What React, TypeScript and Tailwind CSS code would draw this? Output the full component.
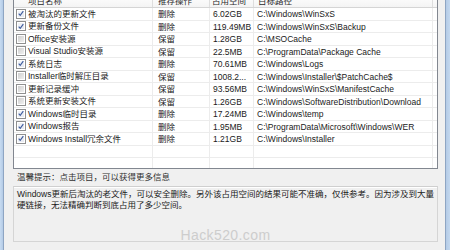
import React from "react";

const rows = [
  { name: "被淘汰的更新文件", checked: true, action: "删除", size: "6.02GB", path: "C:\\Windows\\WinSxS" },
  { name: "更新备份文件", checked: true, action: "删除", size: "119.49MB", path: "C:\\Windows\\WinSxS\\Backup" },
  { name: "Office安装源", checked: false, action: "保留", size: "1.28GB", path: "C:\\MSOCache" },
  { name: "Visual Studio安装源", checked: false, action: "保留", size: "22.5MB", path: "C:\\ProgramData\\Package Cache" },
  { name: "系统日志", checked: true, action: "删除", size: "70.61MB", path: "C:\\Windows\\Logs" },
  { name: "Installer临时解压目录", checked: false, action: "保留", size: "1008.2...", path: "C:\\Windows\\Installer\\$PatchCache$" },
  { name: "更新记录缓冲", checked: false, action: "保留", size: "93.56MB", path: "C:\\Windows\\WinSxS\\ManifestCache" },
  { name: "系统更新安装文件", checked: false, action: "保留", size: "1.26GB", path: "C:\\Windows\\SoftwareDistribution\\Download" },
  { name: "Windows临时目录", checked: true, action: "删除", size: "17.24MB", path: "C:\\Windows\\temp" },
  { name: "Windows报告", checked: true, action: "删除", size: "1.95MB", path: "C:\\ProgramData\\Microsoft\\Windows\\WER" },
  { name: "Windows Install冗余文件", checked: true, action: "删除", size: "1.21GB", path: "C:\\Windows\\Installer" },
];

function CheckBox({ checked }: { checked: boolean }) {
  return (
    <div className="w-[10px] h-[10px] shrink-0 border border-[#8f8f8f] bg-white p-[1px]">
      <div
        className={
          checked
            ? "w-full h-full bg-gradient-to-br from-[#f2f4f8] to-[#e6e9f0] flex items-center justify-center"
            : "w-full h-full bg-gradient-to-br from-[#cfcfcf] to-[#f0f0f0]"
        }
      >
        {checked && (
          <svg width="7" height="7" viewBox="0 0 7 7">
            <path d="M0.8 3.6 L2.6 5.6 L6.2 0.8" fill="none" stroke="#3c5a9c" strokeWidth="1.3" />
          </svg>
        )}
      </div>
    </div>
  );
}

export default function App() {
  return (
    <div
      className="w-[450px] h-[250px] overflow-hidden flex bg-[#f0f0f0] text-[8.5px] text-[#1a1a1a]"
      style={{ fontFamily: '"Liberation Sans", "Noto Sans CJK SC", sans-serif' }}
    >
      <div className="w-[4px] shrink-0 bg-gradient-to-r from-[#c7dbf1] to-[#b4cbe6] border-r border-[#8ea5c3]" />

      <div className="flex-1 flex flex-col pl-[9px] pr-[7px]">
        {/* list view */}
        <div className="-mt-[6px] border border-[#828790] bg-white">
          <div className="flex h-[13px] leading-[12px] border-b border-[#d5d5d5] bg-gradient-to-b from-white to-[#f4f4f4] text-[#2a2a2a]">
            <div className="w-[139px] pl-[14px] border-r border-[#dedede]">项目名称</div>
            <div className="w-[57px] pl-[5px] border-r border-[#dedede]">推荐操作</div>
            <div className="w-[44px] pl-[2px] border-r border-[#dedede]">占用空间</div>
            <div className="w-[179px] pl-[4px] border-r border-[#dedede]">目标路径</div>
            <div className="flex-1" />
          </div>

          <div className="h-[160px] overflow-hidden">
            {rows.map((r, i) => (
              <div key={i} className="flex h-[12.5px] leading-[12px] border-b border-[#ececec] whitespace-nowrap">
                <div className="w-[139px] pl-[2px] flex items-center gap-[2px] border-r border-[#ececec] overflow-hidden">
                  <CheckBox checked={r.checked} />
                  <span>{r.name}</span>
                </div>
                <div className="w-[57px] pl-[5px] border-r border-[#ececec]">{r.action}</div>
                <div className="w-[44px] pl-[3px] border-r border-[#ececec] overflow-hidden">{r.size}</div>
                <div className="w-[179px] pl-[3px] border-r border-[#ececec] overflow-hidden">{r.path}</div>
                <div className="flex-1" />
              </div>
            ))}
            {[0, 1, 2].map((i) => (
              <div key={"e" + i} className="flex h-[12.5px] border-b border-[#ececec]">
                <div className="w-[139px] border-r border-[#ececec]" />
                <div className="w-[57px] border-r border-[#ececec]" />
                <div className="w-[44px] border-r border-[#ececec]" />
                <div className="w-[179px] border-r border-[#ececec]" />
              </div>
            ))}
          </div>
        </div>

        {/* hint */}
        <div className="h-[17px] leading-[17px] pl-[4px] text-[#303030]">温馨提示：点击项目，可以获得更多信息</div>

        {/* description box */}
        <div className="h-[56px] border border-[#d5d5d5] border-t-[#cfcfcf] shadow-[inset_0_1px_0_#ffffff] px-[3px] pt-[2px] flex flex-col">
          <div className="leading-[11px] whitespace-nowrap">
            Windows更新后淘汰的老文件，可以安全删除。另外该占用空间的结果可能不准确，仅供参考。因为涉及到大量
            <br />
            硬链接，无法精确判断到底占用了多少空间。
          </div>
          <div className="mt-[17px] text-center text-[14px] leading-[14px] text-[#cdcdcd] tracking-[0.4px]">
            Hack520.com
          </div>
        </div>
      </div>

      <div className="w-[6px] shrink-0 bg-gradient-to-r from-[#b4cbe6] to-[#c7dbf1] border-l border-[#8ea5c3]" />
    </div>
  );
}
